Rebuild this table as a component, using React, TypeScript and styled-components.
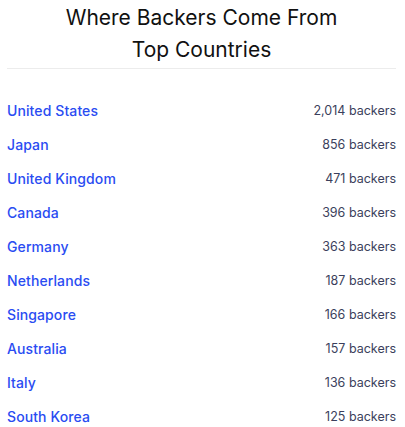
import React from 'react';
import styled, { createGlobalStyle } from 'styled-components';

const GlobalStyle = createGlobalStyle`
  body {
    margin: 0;
    background: #ffffff;
    font-family: 'Inter', 'Noto Sans', Arial, sans-serif;
  }
`;

const Wrapper = styled.div`
  padding: 0 9px 0 7px;
`;

const Heading = styled.h2`
  margin: 0;
  padding-top: 2px;
  text-align: center;
  font-size: 21px;
  font-weight: 400;
  line-height: 32px;
  color: #111111;
  border-bottom: 1px solid #ececec;
  padding-bottom: 2px;
`;

const List = styled.ul`
  list-style: none;
  margin: 0;
  padding: 24px 0 0;
  display: flex;
  flex-direction: column;
`;

const Row = styled.li`
  display: flex;
  justify-content: space-between;
  align-items: center;
  height: 34px;
`;

const Country = styled.a`
  color: #2a4cf2;
  font-size: 14px;
  font-weight: 500;
  letter-spacing: 0.1px;
  text-decoration: none;
`;

const Count = styled.span`
  color: #3b3f5c;
  font-size: 12.5px;
`;

const countries: [string, string][] = [
  ['United States', '2,014'],
  ['Japan', '856'],
  ['United Kingdom', '471'],
  ['Canada', '396'],
  ['Germany', '363'],
  ['Netherlands', '187'],
  ['Singapore', '166'],
  ['Australia', '157'],
  ['Italy', '136'],
  ['South Korea', '125'],
];

export default function App() {
  return (
    <Wrapper>
      <GlobalStyle />
      <Heading>
        Where Backers Come From
        <br />
        Top Countries
      </Heading>
      <List>
        {countries.map(([name, n]) => (
          <Row key={name}>
            <Country href="#">{name}</Country>
            <Count>{n} backers</Count>
          </Row>
        ))}
      </List>
    </Wrapper>
  );
}
